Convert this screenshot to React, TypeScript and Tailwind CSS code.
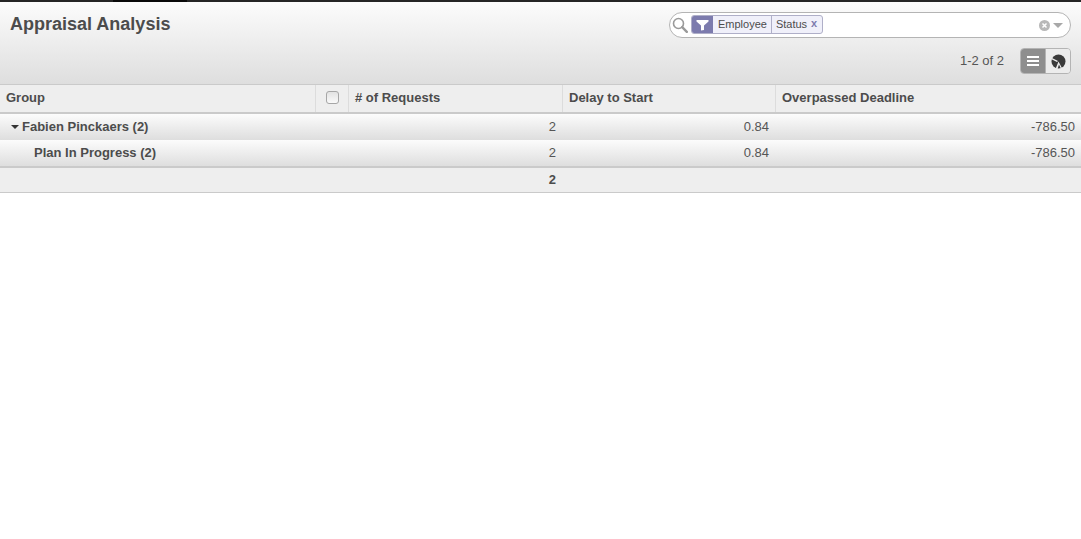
function Row({ label, indent, caret, requests, delay, deadline, shift }: { label: string; indent: string; caret?: boolean; requests: string; delay: string; deadline: string; shift?: boolean }) {
  return (
    <div className={`flex h-[26px] items-center bg-gradient-to-b from-[#fcfcfc] to-[#dedede] text-[13px] leading-[16px] text-[#555] ${shift ? 'pb-[1px]' : ''}`}>
      <div className={`flex w-[349px] items-center font-bold text-[#4c4c4c] ${indent}`}>
        {caret && <span className="mr-[3px] h-0 w-0 border-x-[4px] border-t-[4px] border-x-transparent border-t-[#333]" />}
        {label}
      </div>
      <div className="w-[214px] pr-[7px] text-right">{requests}</div>
      <div className="w-[213px] pr-[7px] text-right">{delay}</div>
      <div className="flex-1 pr-[6px] text-right">{deadline}</div>
    </div>
  );
}

export default function App() {
  return (
    <div className="h-[539px] w-[1081px] overflow-hidden bg-white font-['Liberation_Sans',Arial,sans-serif] text-[#4c4c4c]">
      {/* top bar, the active menu tab still shows as a darker piece */}
      <div className="flex h-[2px] bg-[#262626]">
        <div className="ml-[113px] w-[74px] bg-[#0a0a0a]" />
      </div>

      {/* header */}
      <div className="flex h-[83px] justify-between border-b border-[#cacaca] bg-gradient-to-b from-[#fcfcfc] to-[#dedede] pl-[10px] pr-[10px]">
        <h1 className="mt-[12px] text-[18px] font-bold leading-[20px] text-[#4c4c4c]">Appraisal Analysis</h1>
        <div className="flex flex-col items-end">
          <div className="mt-[10px] flex h-[26px] w-[402px] items-center rounded-[13px] border border-[#b4b4b4] bg-white pl-[2px] pr-[7px]">
            <svg width="16" height="16" viewBox="0 0 16 16" fill="none">
              <circle cx="6.5" cy="6.5" r="5" stroke="#9a9a9a" strokeWidth="1.6" />
              <path d="M10.2 10.2 L14.8 14.8" stroke="#9a9a9a" strokeWidth="2.4" strokeLinecap="round" />
            </svg>
            <div className="mb-[1px] ml-[3px] flex h-[19px] items-stretch overflow-hidden rounded-[3px] border border-[#afafc8] bg-[#f0f0fa] text-[11px] leading-[17px] text-[#4c4c4c]">
              <span className="-my-px -ml-px flex w-[22px] items-center justify-center bg-[#7c7bad]">
                <svg width="13" height="12" viewBox="0 0 13 12">
                  <path d="M0.5 1 H12.5 V2.5 L8 6.5 V11 L5 11.5 V6.5 L0.5 2.5 Z" fill="#fff" />
                </svg>
              </span>
              <span className="pl-[5px] pr-[4px]">Employee</span>
              <span className="flex border-l border-[#afafc8] pl-[4px] pr-[5px]">
                Status<span className="ml-[4px] text-[11px] font-bold leading-[15px] text-[#7c7bad]">x</span>
              </span>
            </div>
            <div className="flex-1" />
            <svg width="11" height="11" viewBox="0 0 11 11">
              <circle cx="5.5" cy="5.5" r="5.5" fill="#b8b8b8" />
              <path d="M3.5 3.5 L7.5 7.5 M7.5 3.5 L3.5 7.5" stroke="#fff" strokeWidth="1.5" />
            </svg>
            <span className="ml-[3px] h-0 w-0 border-x-[5px] border-t-[5px] border-x-transparent border-t-[#a8a8a8]" />
          </div>
          <div className="mt-[10px] flex items-center">
            <span className="mr-[16px] text-[13px] leading-[16px] text-[#555]">1-2 of 2</span>
            <div className="flex h-[26px] w-[51px] overflow-hidden rounded-[4px] border border-[#b4b4b4]">
              <span className="flex w-[25px] items-center justify-center border-r border-[#b4b4b4] bg-[#8e8e8e]">
                <span className="flex w-[12px] flex-col gap-[2px]">
                  <span className="h-[2px] bg-white" />
                  <span className="h-[2px] bg-white" />
                  <span className="h-[2px] bg-white" />
                </span>
              </span>
              <span className="flex flex-1 items-center justify-center bg-[#ececec]">
                <svg width="15" height="15" viewBox="0 0 15 15">
                  <circle cx="7.5" cy="7.5" r="7" fill="#3a3a3a" />
                  <path d="M7 7 L0 3.5 L0 5 L6 8 Z" fill="#ececec" />
                  <path d="M7.5 7.5 L4.5 15 L6.5 15 L8 10.5 L10 15 L11.5 15 Z" fill="#ececec" />
                </svg>
              </span>
            </div>
          </div>
        </div>
      </div>

      {/* table head */}
      <div className="flex h-[29px] border-b-2 border-[#cacaca] bg-[#eeeeee] text-[13px] font-bold leading-[16px] text-[#4c4c4c]">
        <div className="flex w-[316px] items-center border-r border-[#dcdcdc] pb-[2px] pl-[6px]">Group</div>
        <div className="flex w-[33px] items-center justify-center border-r border-[#dcdcdc] pb-[2px]">
          <span className="h-[13px] w-[13px] rounded-[3px] border border-[#a6a6a6] bg-gradient-to-b from-[#e2e2e2] to-[#fafafa]" />
        </div>
        <div className="flex w-[214px] items-center border-r border-[#dcdcdc] pb-[2px] pl-[6px]">
          # of Requests
        </div>
        <div className="flex w-[213px] items-center border-r border-[#dcdcdc] pb-[2px] pl-[6px]">Delay to Start</div>
        <div className="flex flex-1 items-center pb-[2px] pl-[6px]">Overpassed Deadline</div>
      </div>

      <Row label="Fabien Pinckaers (2)" indent="pl-[11px]" caret shift requests="2" delay="0.84" deadline="-786.50" />
      <Row label="Plan In Progress (2)" indent="pl-[34px]" requests="2" delay="0.84" deadline="-786.50" />

      {/* footer */}
      <div className="flex h-[27px] items-center border-t-2 border-b border-[#cacaca] bg-[#eeeeee] pb-[1px] text-[13px] font-bold leading-[16px]">
        <div className="w-[349px]" />
        <div className="w-[214px] pr-[7px] text-right">2</div>
      </div>
    </div>
  );
}
